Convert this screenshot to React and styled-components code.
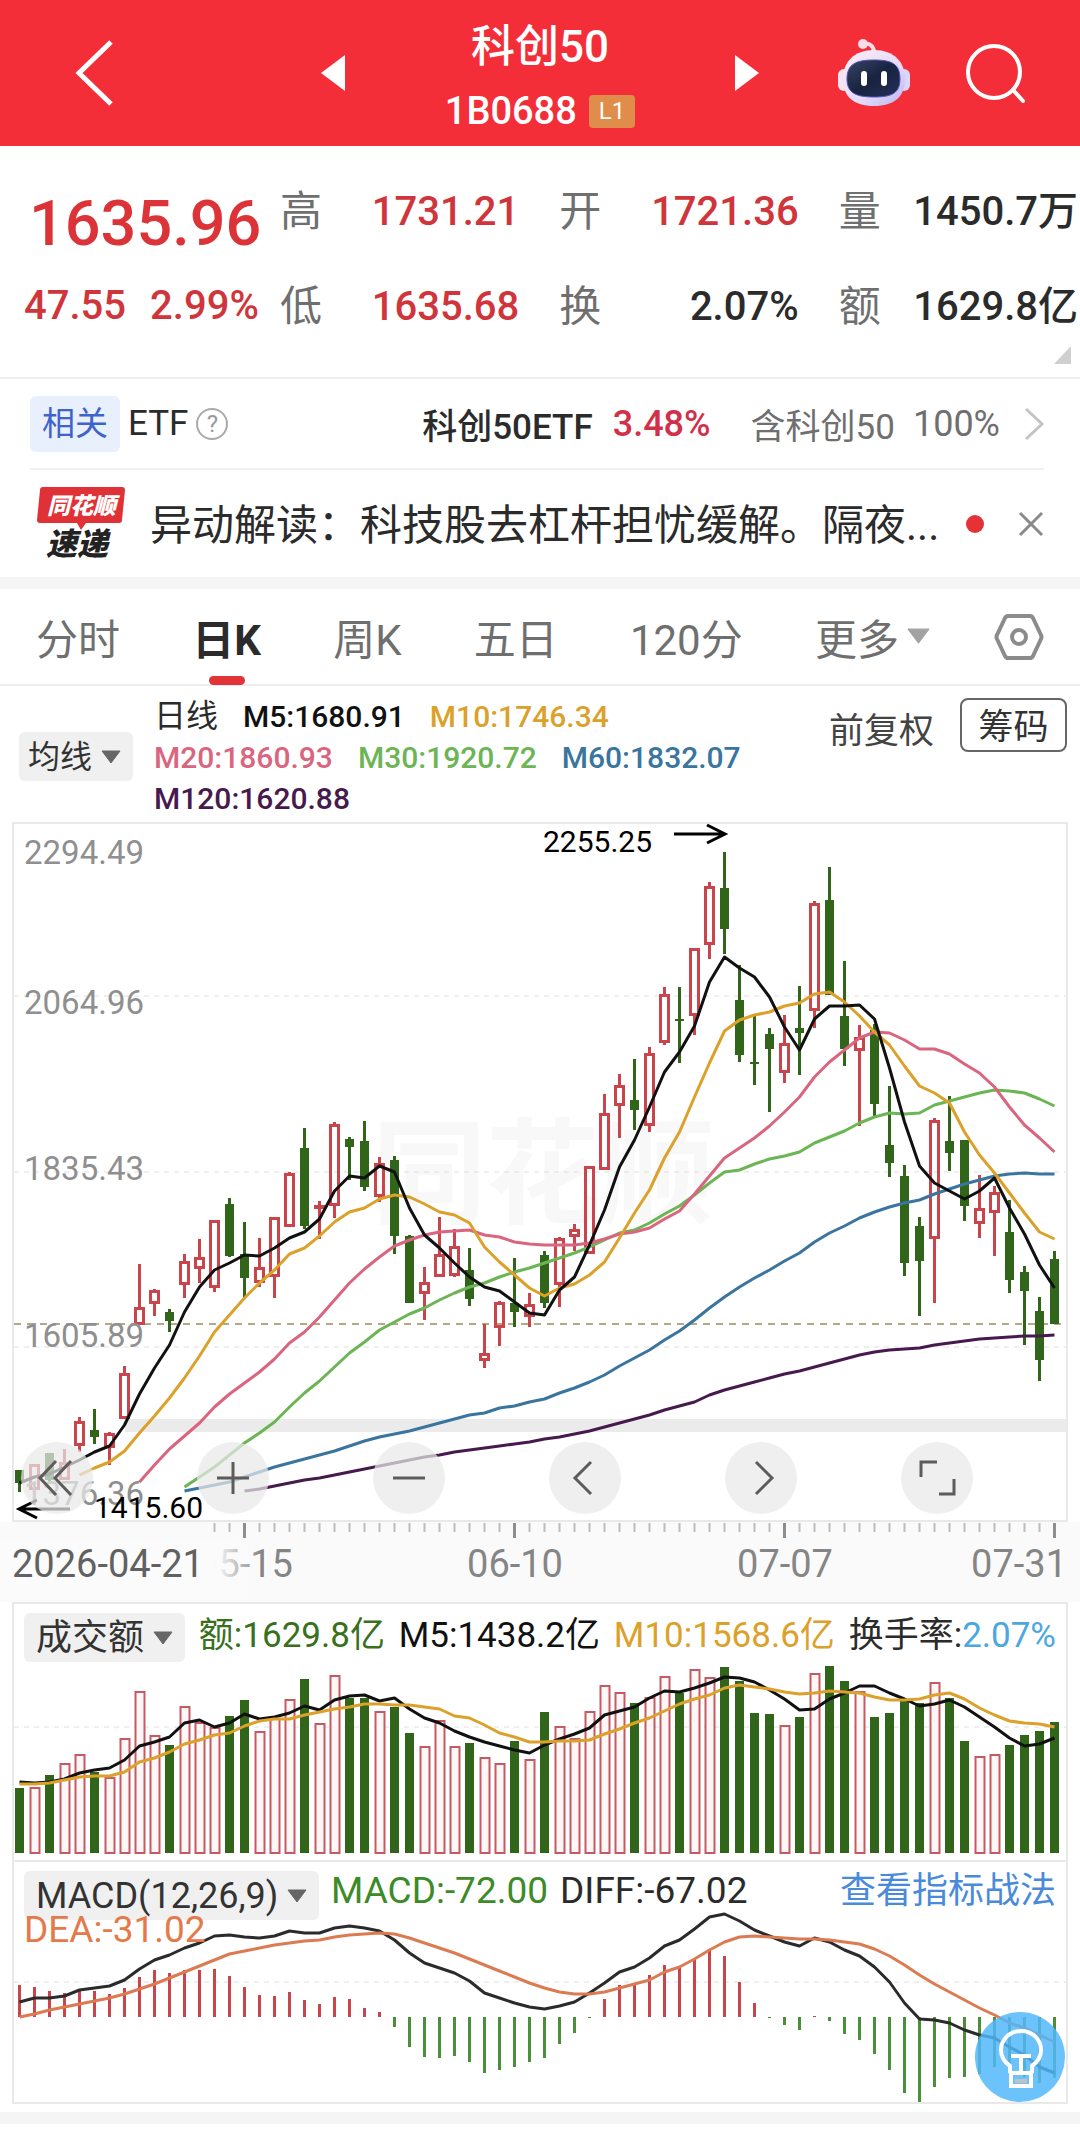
import React, { useState } from "react";
import styled, { createGlobalStyle } from "styled-components";

const GlobalStyle = createGlobalStyle`
  :root {
    --brand: #f42e38;
    --up: #d0353b;
    --dark: #2b2b2b;
    --grey: #6f6f6f;
    --line: #e9e9e9;
    --chip: #f0f0f0;
  }

  * {
    box-sizing: border-box;
  }

  body {
    margin: 0;
    background: #fff;
    color: var(--dark);
    font-family: Roboto, "Noto Sans CJK SC", sans-serif;
  }

  button, select {
    margin: 0;
    padding: 0;
    border: 0;
    background: none;
    color: inherit;
    font: inherit;
    cursor: pointer;
  }

  svg {
    display: block;
    overflow: visible;
  }
`;

const Page = styled.div`
  overflow-x: hidden;
`;

const Header = styled.header`
  display: grid;
  grid-template-columns: 1fr 438px 1fr;
  align-items: center;
  height: 146px;
  background: var(--brand);
  color: #fff;
`;

const HeaderSide = styled.div`
  display: flex;
  align-items: center;
  justify-content: ${props => (props.$end ? "flex-end" : "flex-start")};
  gap: 52px;
  padding: ${props => (props.$end ? "0 54px 0 0" : "0 0 0 72px")};
`;

const HeaderCenter = styled.div`
  display: flex;
  align-items: center;
  justify-content: space-between;
`;

const Title = styled.div`
  display: flex;
  flex-direction: column;
  align-items: center;
  padding-top: 12px;

  h1 {
    margin: 0;
    font-size: 44px;
    font-weight: 500;
    line-height: 64px;
  }

  p {
    display: flex;
    align-items: center;
    gap: 12px;
    margin: 0;
    font-size: 38px;
    font-weight: 500;
    line-height: 64px;
  }
`;

const LevelBadge = styled.span`
  padding: 0 10px;
  border-radius: 4px;
  background: #e08c4a;
  font-size: 24px;
  font-weight: 400;
  line-height: 33px;
`;

const Quote = styled.section`
  position: relative;
  display: flex;
  height: 233px;
  padding: 18px 2px 0 24px;
  border-bottom: 2px solid #efefef;
`;

const PriceColumn = styled.div`
  width: 256px;
  color: var(--up);
  font-weight: 500;
`;

const Price = styled.div`
  padding-left: 5px;
  font-size: 63px;
  line-height: 120px;
  color: #dc3338;
`;

const Change = styled.div`
  display: flex;
  gap: 24px;
  font-size: 40px;
  line-height: 44px;
`;

const Stats = styled.dl`
  flex: 1;
  display: grid;
  grid-template-columns: repeat(3, 1fr);
  grid-auto-rows: 95px;
  column-gap: 40px;
  margin: 0;
`;

const Stat = styled.div`
  display: flex;
  justify-content: space-between;
  align-items: center;
  font-size: 40px;
  line-height: 95px;
  white-space: nowrap;

  dt {
    font-size: 42px;
    color: var(--grey);
  }

  dd {
    margin: 0;
    font-weight: 500;
    color: ${props => (props.$up ? "var(--up)" : "var(--dark)")};
  }
`;

const Corner = styled.span`
  position: absolute;
  right: 9px;
  bottom: 13px;
  border-left: 17px solid transparent;
  border-bottom: 18px solid #cfcfcf;
`;

const EtfRow = styled.a`
  display: flex;
  align-items: center;
  height: 91px;
  margin: 0 36px 0 30px;
  border-bottom: 2px solid #f1f1f1;
  color: var(--grey);
  font-size: 35px;
  text-decoration: none;
  white-space: nowrap;
`;

const EtfTag = styled.span`
  margin-right: 8px;
  padding: 0 12px;
  border-radius: 6px;
  background: #e8effd;
  color: #3e63cb;
  font-size: 33px;
  line-height: 56px;
`;

const EtfName = styled.span`
  margin-left: ${props => (props.$push ? "auto" : "0")};
  font-weight: ${props => (props.$push ? 500 : 400)};
  color: var(--dark);
`;

const Help = styled.span`
  width: 32px;
  margin-left: 8px;
  border: 2px solid #aaa;
  border-radius: 50%;
  color: #999;
  font-size: 24px;
  line-height: 28px;
  text-align: center;
`;

const EtfRate = styled.span`
  margin: 0 40px 0 20px;
  font-size: 36px;
  font-weight: 500;
  color: #d2304a;
`;

const EtfShare = styled.span`
  margin: 0 24px 0 18px;
  font-size: 36px;
`;

const News = styled.div`
  display: flex;
  align-items: center;
  height: 107px;
  padding: 0 36px;

  p {
    flex: 1;
    margin: 0 24px 0 24px;
    padding-top: 4px;
    overflow: hidden;
    font-size: 42px;
    line-height: 60px;
    white-space: nowrap;
  }
`;

const Dot = styled.span`
  width: 18px;
  height: 18px;
  margin-right: 34px;
  border-radius: 50%;
  background: #e53237;
`;

const Divider = styled.div`
  height: 12px;
  background: #f5f5f5;
`;

const TabBar = styled.div`
  display: flex;
  align-items: center;
  gap: 64px;
  height: 97px;
  padding: 0 36px;
  border-bottom: 2px solid #ececec;
`;

const Tabs = styled.nav`
  flex: 1;
  display: flex;
  justify-content: space-between;
`;

const Tab = styled.button`
  position: relative;
  display: flex;
  align-items: center;
  gap: 8px;
  height: 97px;
  color: ${props => (props.$active ? "var(--dark)" : "var(--grey)")};
  font-size: 42px;
  font-weight: ${props => (props.$active ? 700 : 400)};

  &::after {
    content: "";
    display: ${props => (props.$active ? "block" : "none")};
    position: absolute;
    bottom: 0;
    left: 50%;
    width: 36px;
    height: 9px;
    margin-left: -18px;
    border-radius: 5px;
    background: #e23338;
  }
`;

const Averages = styled.div`
  display: flex;
  align-items: flex-start;
  height: 136px;
  padding: 10px 13px 0 19px;
`;

const Legend = styled.div`
  flex: 1;
  display: flex;
  flex-wrap: wrap;
  align-content: flex-start;
  column-gap: 25px;
  margin-left: 21px;
  padding-right: 40px;
  font-size: 30px;
  font-weight: 500;
  line-height: 41px;

  span:first-child {
    font-size: 32px;
    font-weight: 400;
  }
`;

const Tinted = styled.span`
  color: ${props => props.$color};
  white-space: nowrap;
`;

const SelectBox = styled.label`
  position: relative;
  flex: none;
  margin-top: ${props => (props.$drop ? "36px" : "0")};

  select {
    display: block;
    height: 49px;
    padding: 0 40px 0 ${props => props.$pad || 12}px;
    border-radius: 6px;
    background: var(--chip);
    color: #333;
    font-size: ${props => props.$size || 32}px;
    line-height: 48px;
    appearance: none;
  }

  svg {
    position: absolute;
    right: 12px;
    top: 18px;
    pointer-events: none;
  }
`;

const Adjust = styled.button`
  margin: 8px 26px 0 16px;
  color: #444;
  font-size: 35px;
  line-height: 56px;
`;

const Chips = styled.button`
  width: 107px;
  height: 54px;
  margin-top: 2px;
  padding-top: 6px;
  border: 2px solid #666;
  border-radius: 8px;
  color: #333;
  font-size: 35px;
  line-height: 44px;
`;

const Panel = styled.section`
  position: relative;
  margin: 0 12px;
  border: 2px solid var(--line);
  border-bottom-width: ${props => (props.$open ? "0" : "2px")};

  > svg {
    width: 100%;
    height: auto;
  }
`;

const Controls = styled.div`
  position: absolute;
  left: 7px;
  bottom: 6px;
  display: flex;
  gap: 104px;
`;

const RoundButton = styled.button`
  display: grid;
  place-items: center;
  width: 72px;
  height: 72px;
  border-radius: 50%;
  background: rgba(233, 233, 233, 0.72);
`;

const Axis = styled.div`
  background: #fafafa;

  svg {
    width: 100%;
    height: auto;
  }
`;

const VolumeHead = styled.div`
  display: flex;
  justify-content: space-between;
  align-items: flex-start;
  height: 60px;
  padding: 9px 10px 0 10px;
  font-size: 35px;
  line-height: 46px;
  white-space: nowrap;
`;

const MacdHead = styled.div`
  position: absolute;
  top: 9px;
  left: 10px;
  right: 10px;
  font-size: 37px;
  line-height: 40px;
  white-space: nowrap;
`;

const MacdRow = styled.div`
  display: flex;
  align-items: flex-start;
  gap: 12px;
  height: 39px;

  a {
    margin-left: auto;
    color: #4a8adb;
    font-size: 36px;
    text-decoration: none;
  }
`;

// sits over the lower edge of the indicator select
const DeaValue = styled.div`
  position: relative;
  z-index: 1;
  color: #e5794a;
`;

const BulbButton = styled.button`
  position: absolute;
  right: 1px;
  bottom: 0;
  width: 90px;
  height: 90px;
  border-radius: 50%;
  background: rgba(80, 184, 252, 0.84);
`;

const Footer = styled.div`
  padding-top: 8px;
`;

const COLORS = {
  red: "#c9444b",
  green: "#31661a",
  m5: "#111111",
  m10: "#dba12a",
  m20: "#d9657f",
  m30: "#6cb554",
  m60: "#3a759f",
  m120: "#471a4e",
};

// u = close above open, d = close below open; then high, body top, body bottom, low
const candles = [
  ["d", 1470, 1470, 1483, 1492], ["u", 1464, 1464, 1490, 1490], ["d", 1453, 1453, 1480, 1484],
  ["u", 1449, 1462, 1480, 1480], ["u", 1417, 1421, 1446, 1452], ["d", 1409, 1430, 1437, 1444],
  ["u", 1432, 1433, 1448, 1465], ["u", 1366, 1373, 1419, 1419], ["u", 1264, 1307, 1325, 1325],
  ["u", 1289, 1290, 1304, 1316], ["d", 1309, 1312, 1321, 1332], ["u", 1254, 1261, 1285, 1298],
  ["u", 1239, 1257, 1269, 1283], ["u", 1220, 1220, 1288, 1292], ["d", 1198, 1204, 1256, 1257],
  ["d", 1222, 1254, 1278, 1298], ["u", 1238, 1267, 1283, 1287], ["u", 1217, 1217, 1277, 1298],
  ["u", 1172, 1173, 1227, 1227], ["d", 1128, 1148, 1226, 1229], ["u", 1201, 1205, 1208, 1239],
  ["u", 1122, 1124, 1206, 1218], ["d", 1137, 1139, 1147, 1180], ["d", 1121, 1141, 1187, 1191],
  ["u", 1157, 1163, 1197, 1202], ["d", 1156, 1160, 1236, 1254], ["d", 1235, 1236, 1303, 1303],
  ["u", 1267, 1282, 1294, 1320], ["u", 1217, 1254, 1277, 1277], ["u", 1229, 1246, 1276, 1277],
  ["d", 1248, 1270, 1299, 1306], ["u", 1324, 1353, 1361, 1368], ["u", 1301, 1302, 1328, 1346],
  ["d", 1258, 1303, 1312, 1327], ["u", 1293, 1304, 1317, 1327], ["d", 1251, 1255, 1303, 1308],
  ["u", 1237, 1238, 1285, 1307], ["u", 1224, 1229, 1237, 1251], ["u", 1166, 1166, 1254, 1254],
  ["u", 1094, 1113, 1170, 1170], ["u", 1074, 1085, 1106, 1138], ["d", 1059, 1100, 1110, 1130],
  ["u", 1047, 1053, 1126, 1132], ["u", 987, 994, 1043, 1045], ["d", 987, 1019, 1021, 1063],
  ["u", 948, 948, 1016, 1035], ["u", 882, 886, 945, 959], ["d", 852, 888, 929, 954],
  ["d", 965, 1000, 1055, 1062], ["d", 1015, 1062, 1064, 1085], ["d", 1028, 1034, 1049, 1112],
  ["u", 1015, 1043, 1073, 1083], ["d", 986, 1028, 1033, 1075], ["u", 901, 903, 1011, 1028],
  ["d", 867, 900, 995, 995], ["d", 961, 1016, 1049, 1066], ["u", 1025, 1037, 1051, 1126],
  ["d", 1024, 1030, 1104, 1116], ["d", 1086, 1145, 1163, 1177], ["d", 1165, 1176, 1263, 1276],
  ["d", 1217, 1226, 1261, 1316], ["u", 1118, 1120, 1239, 1303], ["d", 1096, 1141, 1153, 1171],
  ["d", 1140, 1140, 1206, 1221], ["u", 1175, 1208, 1224, 1238], ["u", 1186, 1192, 1213, 1256],
  ["d", 1200, 1232, 1280, 1293], ["d", 1266, 1272, 1291, 1345], ["d", 1297, 1311, 1360, 1381],
  ["d", 1251, 1259, 1324, 1324],
];

const m5 = [
  1483, 1477, 1474, 1467, 1460, 1452, 1446, 1425, 1394, 1368, 1345, 1312, 1287, 1270, 1263, 1255,
  1256, 1248, 1238, 1232, 1219, 1191, 1176, 1178, 1166, 1172, 1208, 1235, 1248, 1263, 1277, 1287,
  1291, 1302, 1313, 1315, 1290, 1277, 1245, 1210, 1167, 1140, 1107, 1072, 1052, 1026, 982, 957,
  968, 977, 997, 1027, 1050, 1019, 1006, 1006, 1005, 1019, 1068, 1122, 1166, 1183, 1191, 1199,
  1191, 1178, 1208, 1234, 1265, 1288,
];
const m10 = [
  1475, 1468, 1462, 1451, 1433, 1416, 1398, 1378, 1356, 1332, 1315, 1298, 1283, 1270, 1254, 1248,
  1236, 1222, 1212, 1208, 1199, 1195, 1197, 1204, 1212, 1215, 1223, 1247, 1262, 1275, 1288, 1296,
  1288, 1284, 1275, 1262, 1238, 1213, 1190, 1158, 1132, 1097, 1063, 1031, 1020, 1015, 1012, 1006,
  1003, 994, 992, 1002, 1016, 1032, 1045, 1066, 1086, 1093, 1103, 1132, 1155, 1173, 1193, 1213,
  1232, 1239,
];
const m20 = [
  1482, 1465, 1449, 1436, 1423, 1407, 1394, 1383, 1372, 1359, 1343, 1332, 1317, 1300, 1283, 1269,
  1257, 1246, 1240, 1235, 1232, 1231, 1230, 1235, 1237, 1242, 1244, 1245, 1245, 1245, 1243, 1239,
  1234, 1232, 1228, 1219, 1211, 1194, 1176, 1158, 1148, 1138, 1126, 1112, 1097, 1077, 1062, 1050,
  1038, 1032, 1033, 1040, 1049, 1049, 1054, 1064, 1073, 1087, 1107, 1125, 1138, 1152,
];
const m30 = [
  1487, 1477, 1467, 1455, 1443, 1433, 1422, 1407, 1393, 1381, 1367, 1353, 1342, 1330, 1322, 1314,
  1308, 1300, 1293, 1287, 1283, 1277, 1272, 1268, 1263, 1258, 1253, 1247, 1240, 1233, 1230, 1223,
  1214, 1206, 1195, 1183, 1172, 1170, 1164, 1159, 1156, 1152, 1143, 1137, 1131, 1123, 1117, 1113,
  1114, 1113, 1105, 1101, 1097, 1093, 1090, 1091, 1093, 1099, 1106,
];
const m60 = [
  1491, 1488, 1485, 1482, 1477, 1472, 1467, 1463, 1459, 1455, 1451, 1446, 1441, 1437, 1434, 1431,
  1427, 1423, 1419, 1415, 1413, 1408, 1406, 1402, 1399, 1393, 1388, 1382, 1375, 1366, 1358, 1350,
  1340, 1331, 1320, 1308, 1297, 1287, 1278, 1270, 1261, 1253, 1242, 1233, 1226, 1218, 1212, 1207,
  1203, 1200, 1194, 1189, 1184, 1180, 1176, 1174, 1173, 1174, 1174,
];
const m120 = [
  1491, 1489, 1486, 1483, 1480, 1478, 1475, 1472, 1469, 1466, 1463, 1460, 1457, 1455, 1452, 1450,
  1448, 1446, 1444, 1442, 1439, 1437, 1434, 1431, 1427, 1423, 1419, 1415, 1410, 1406, 1402, 1395,
  1390, 1386, 1382, 1378, 1374, 1371, 1367, 1363, 1359, 1355, 1352, 1350, 1349, 1348, 1345, 1343,
  1341, 1339, 1338, 1337, 1336, 1336, 1335,
];

const volumes = [
  1788, 1787, 1775, 1763, 1754, 1772, 1777, 1738, 1691, 1735, 1745, 1706, 1722, 1727, 1716, 1700,
  1731, 1718, 1699, 1679, 1723, 1675, 1698, 1698, 1711, 1707, 1733, 1746, 1720, 1746, 1743, 1757,
  1763, 1741, 1759, 1712, 1726, 1738, 1711, 1685, 1692, 1703, 1697, 1676, 1693, 1669, 1677, 1667,
  1681, 1713, 1714, 1725, 1717, 1673, 1666, 1681, 1691, 1717, 1713, 1700, 1703, 1682, 1698, 1741,
  1756, 1754, 1745, 1735, 1731, 1722,
];
const volumeM5 = [
  1782, 1783, 1782, 1779, 1773, 1770, 1768, 1760, 1746, 1742, 1737, 1723, 1720, 1727, 1723, 1714,
  1719, 1717, 1713, 1706, 1710, 1700, 1696, 1695, 1701, 1698, 1709, 1718, 1723, 1731, 1737, 1742,
  1746, 1750, 1753, 1745, 1739, 1734, 1728, 1715, 1711, 1707, 1698, 1691, 1692, 1688, 1683, 1677,
  1678, 1682, 1690, 1699, 1710, 1709, 1699, 1693, 1686, 1686, 1693, 1699, 1706, 1704, 1700, 1707,
  1717, 1727, 1738, 1746, 1744, 1738,
];
const volumeM10 = [
  1784, 1784, 1783, 1780, 1777, 1776, 1776, 1772, 1762, 1758, 1752, 1744, 1740, 1735, 1733, 1726,
  1721, 1719, 1719, 1715, 1712, 1709, 1707, 1704, 1704, 1705, 1705, 1707, 1709, 1716, 1718, 1725,
  1733, 1737, 1742, 1742, 1741, 1741, 1740, 1734, 1729, 1723, 1718, 1711, 1704, 1699, 1695, 1688,
  1685, 1687, 1689, 1692, 1694, 1693, 1691, 1692, 1693, 1697, 1700, 1700, 1699, 1695, 1693, 1699,
  1708, 1715, 1721, 1723, 1724, 1727,
];

const MACD_ZERO = 2017;
const macd = [
  1985, 1987, 1991, 1993, 1991, 1991, 1994, 1988, 1977, 1970, 1973, 1970, 1970, 1969, 1976, 1987,
  1995, 1996, 1992, 2000, 2004, 1997, 1999, 2008, 2012, 2027, 2047, 2057, 2058, 2056, 2062, 2073,
  2070, 2067, 2062, 2058, 2044, 2033, 2018, 1999, 1985, 1984, 1975, 1965, 1966, 1959, 1951, 1956,
  1982, 2003, 2018, 2025, 2030, 2016, 2021, 2034, 2040, 2054, 2070, 2093, 2102, 2087, 2078, 2077,
  2074, 2067, 2073, 2077, 2083, 2078,
];
const diff = [
  2002, 1998, 1998, 1996, 1990, 1988, 1986, 1980, 1969, 1960, 1955, 1948, 1943, 1936, 1935, 1937,
  1938, 1936, 1931, 1933, 1933, 1928, 1926, 1928, 1931, 1940, 1953, 1963, 1968, 1973, 1981, 1993,
  1998, 2003, 2007, 2009, 2006, 2002, 1993, 1983, 1972, 1967, 1958, 1946, 1940, 1929, 1917, 1914,
  1921, 1930, 1936, 1942, 1946, 1938, 1942, 1950, 1956, 1967, 1982, 2003, 2019, 2020, 2023, 2030,
  2035, 2038, 2047, 2055, 2067, 2073,
];
const dea = [
  2017, 2014, 2010, 2007, 2004, 2001, 1998, 1994, 1989, 1984, 1978, 1972, 1966, 1960, 1954, 1951,
  1948, 1945, 1943, 1941, 1940, 1937, 1935, 1934, 1933, 1934, 1938, 1943, 1948, 1953, 1959, 1965,
  1971, 1977, 1983, 1988, 1992, 1994, 1994, 1992, 1988, 1984, 1980, 1972, 1967, 1959, 1950, 1942,
  1937, 1936, 1937, 1938, 1939, 1939, 1940, 1942, 1944, 1949, 1956, 1965, 1975, 1984, 1992, 2000,
  2008, 2015, 2023, 2028, 2035, 2042,
];

const xAt = i => 19.5 + i * 15;

const Line = ({ data, color, start = 0, width = 3 }) => (
  <polyline
    points={data.map((y, i) => `${xAt(i + start)},${y}`).join(" ")}
    fill="none"
    stroke={color}
    strokeWidth={width}
    strokeLinejoin="round"
  />
);

const Grid = ({ rows }) =>
  rows.map(y => (
    <line key={y} x1="14" x2="1066" y1={y} y2={y} stroke="#dedede" strokeDasharray="5 5" />
  ));

const Candle = ({ index, data }) => {
  const [dir, high, top, bottom, low] = data;
  const x = xAt(index);
  if (dir === "d") {
    return (
      <g fill={COLORS.green}>
        <rect x={x - 1.5} y={high} width="3" height={low - high} />
        <rect x={x - 4.5} y={top} width="9" height={Math.max(bottom - top, 2)} />
      </g>
    );
  }
  return (
    <g stroke={COLORS.red} strokeWidth="3" fill="none">
      <path d={`M${x} ${high}V${top}M${x} ${bottom}V${low}`} />
      <rect x={x - 4} y={top + 1.5} width="8" height={Math.max(bottom - top - 3, 1)} />
    </g>
  );
};

const priceLabels = [
  ["2294.49", 864],
  ["2064.96", 1014],
  ["1835.43", 1180],
  ["1605.89", 1347],
  ["1376.36", 1505],
];

const PriceChart = () => (
  <svg viewBox="14 824 1052 696">
    <text x="372" y="1214" fontSize="114" fontWeight="700" fill="#f8f8f8">
      同花顺
    </text>
    <Grid rows={[996, 1172, 1347]} />
    <rect x="125" y="1419" width="941" height="13" fill="#ebebeb" />
    <line x1="14" x2="1066" y1="1324" y2="1324" stroke="#b3aa84" strokeWidth="2" strokeDasharray="7 6" />
    {candles.map((c, i) => (
      <Candle key={i} index={i} data={c} />
    ))}
    <Line data={m120} color={COLORS.m120} start={15} />
    <Line data={m60} color={COLORS.m60} start={11} />
    <Line data={m30} color={COLORS.m30} start={11} />
    <Line data={m20} color={COLORS.m20} start={8} />
    <Line data={m10} color={COLORS.m10} start={4} />
    <Line data={m5} color={COLORS.m5} />
    <g fontSize="33" fill="#8f8f8f">
      {priceLabels.map(([label, y]) => (
        <text key={label} x="24" y={y}>
          {label}
        </text>
      ))}
    </g>
    <g fontSize="30" fill="#000">
      <text x="543" y="852">2255.25</text>
      <text x="94" y="1518">1415.60</text>
    </g>
    <g fill="none" stroke="#000" strokeWidth="3">
      <path d="M674 834H724M707 825L725 834L707 843" />
      <path d="M70 1509H20M37 1500L19 1509L37 1518" />
    </g>
  </svg>
);

const TimeAxis = () => (
  <Axis>
    <svg viewBox="0 1522 1080 80">
      <defs>
        <linearGradient id="axisFade" x1="0" x2="1" y1="0" y2="0">
          <stop offset="0.82" stopColor="#fbfbfb" />
          <stop offset="1" stopColor="#fbfbfb" stopOpacity="0" />
        </linearGradient>
      </defs>
      {candles.map((_, i) => {
        const major = i % 18 === 15;
        return i < 13 ? null : (
          <line
            key={i}
            x1={xAt(i)}
            x2={xAt(i)}
            y1="1523"
            y2={major ? 1538 : 1532}
            stroke={major ? "#8e8e8e" : "#bdbdbd"}
            strokeWidth={major ? 3 : 2}
          />
        );
      })}
      <g fontSize="38" fill="#858585" textAnchor="middle">
        <text x="245" y="1577">05-15</text>
        <text x="515" y="1577">06-10</text>
        <text x="785" y="1577">07-07</text>
        <text x="1067" y="1577" textAnchor="end">07-31</text>
      </g>
      <rect x="0" y="1540" width="262" height="60" fill="url(#axisFade)" />
      <text x="12" y="1577" fontSize="38" fill="#616161">2026-04-21</text>
    </svg>
  </Axis>
);

const VolumeChart = () => (
  <svg viewBox="14 1664 1052 196">
    <Grid rows={[1727]} />
    {volumes.map((y, i) =>
      candles[i][0] === "d" ? (
        <rect key={i} x={xAt(i) - 4.5} y={y} width="9" height={1853 - y} fill={COLORS.green} />
      ) : (
        <rect
          key={i}
          x={xAt(i) - 4}
          y={y + 1}
          width="9"
          height={1852 - y}
          fill="#fff6f6"
          stroke="#c55a64"
          strokeWidth="2"
        />
      )
    )}
    <Line data={volumeM5} color={COLORS.m5} />
    <Line data={volumeM10} color={COLORS.m10} />
  </svg>
);

const MacdChart = () => (
  <svg viewBox="14 1862 1052 240">
    <Grid rows={[1982]} />
    {macd.map((y, i) => (
      <line
        key={i}
        x1={xAt(i)}
        x2={xAt(i)}
        y1={MACD_ZERO}
        y2={y}
        stroke={y < MACD_ZERO ? "#c9444b" : "#4a8f3a"}
        strokeWidth="3"
      />
    ))}
    <Line data={diff} color="#2b2b2b" />
    <Line data={dea} color="#dc7a52" />
  </svg>
);

const Caret = ({ size = 20, color = "#666" }) => (
  <svg width={size} height={size * 0.7} viewBox="0 0 20 14">
    <path d="M1 1H19L10 13Z" fill={color} stroke={color} strokeLinejoin="round" />
  </svg>
);

const Robot = () => (
  <svg width="76" height="76" viewBox="0 -2 76 76">
    <defs>
      <linearGradient id="shell" x1="0" x2="1" y1="0" y2="1">
        <stop offset="0" stopColor="#fdeef6" />
        <stop offset="0.6" stopColor="#e3daf8" />
        <stop offset="1" stopColor="#b9b3f2" />
      </linearGradient>
      <linearGradient id="visor" x1="0" x2="1" y1="0" y2="1">
        <stop offset="0" stopColor="#3a4466" />
        <stop offset="0.5" stopColor="#182340" />
        <stop offset="1" stopColor="#24305a" />
      </linearGradient>
    </defs>
    <path d="M28 7C34 6 38 9 38 16" fill="none" stroke="#fbdbe6" strokeWidth="4" />
    <circle cx="27" cy="7" r="5" fill="#fbdbe6" />
    <rect x="2" y="32" width="12" height="22" rx="6" fill="#f7e4f2" />
    <rect x="62" y="32" width="12" height="22" rx="6" fill="#dcd6fa" />
    <path
      d="M38 13C58 13 69 25 69 42C69 60 58 69 38 69C18 69 7 60 7 42C7 25 18 13 38 13Z"
      fill="url(#shell)"
    />
    <path
      d="M38 23C56 23 64 27 64 42C64 56 56 60 38 60C20 60 11 56 11 42C11 27 20 23 38 23Z"
      fill="url(#visor)"
      stroke="#5750b4"
      strokeWidth="1"
    />
    <rect x="25" y="34" width="6" height="15" rx="3" fill="#fff" />
    <rect x="45" y="34" width="6" height="15" rx="3" fill="#fff" />
  </svg>
);

const NewsLogo = () => (
  <svg width="90" height="76" viewBox="0 0 90 76">
    <path
      d="M7 1H86Q89 1 89 4L86 34Q86 37 83 37H50L45 44L41 37H4Q1 37 1 34L4 4Q4 1 7 1Z"
      fill="#e03236"
    />
    <text x="11" y="28" fontSize="23" fontWeight="900" fontStyle="italic" fill="#fff">
      同花顺
    </text>
    <text x="10" y="69" fontSize="31" fontWeight="900" fontStyle="italic" fill="#222">
      速递
    </text>
  </svg>
);

const Glyph = ({ d, size = 40 }) => (
  <svg width={size} height={size} viewBox="0 0 40 40">
    <path d={d} fill="none" stroke="#5c5c5c" strokeWidth="3" />
  </svg>
);

const controls = [
  ["快退", "M19 3L3 20L19 37M34 3L18 20L34 37"],
  ["放大", "M4 20H36M20 4V36"],
  ["缩小", "M4 20H36"],
  ["左移", "M26 4L10 20L26 36"],
  ["右移", "M15 4L31 20L15 36"],
  ["全屏", "M4 19V4H20M22 36H37V21"],
];

const tabs = ["分时", "日K", "周K", "五日", "120分"];

const App = () => {
  const [active, setActive] = useState("日K");

  return (
    <Page>
      <GlobalStyle />
      <Header>
        <HeaderSide>
          <button aria-label="返回">
            <svg width="44" height="68" viewBox="0 0 44 68">
              <path d="M39 3L7 34L39 65" fill="none" stroke="#fff" strokeWidth="5" />
            </svg>
          </button>
        </HeaderSide>
        <HeaderCenter>
          <button aria-label="上一个">
            <svg width="24" height="36" viewBox="0 0 24 36">
              <path d="M0 18L24 0V36Z" fill="#fff" />
            </svg>
          </button>
          <Title>
            <h1>科创50</h1>
            <p>
              1B0688 <LevelBadge>L1</LevelBadge>
            </p>
          </Title>
          <button aria-label="下一个">
            <svg width="24" height="36" viewBox="0 0 24 36">
              <path d="M24 18L0 0V36Z" fill="#fff" />
            </svg>
          </button>
        </HeaderCenter>
        <HeaderSide $end>
          <button aria-label="智能助手">
            <Robot />
          </button>
          <button aria-label="搜索">
            <svg width="62" height="62" viewBox="0 0 62 62">
              <circle cx="30" cy="30" r="26" fill="none" stroke="#fff" strokeWidth="4" />
              <path d="M49 48L59 59" stroke="#fff" strokeWidth="4" strokeLinecap="round" />
            </svg>
          </button>
        </HeaderSide>
      </Header>

      <Quote>
        <PriceColumn>
          <Price>1635.96</Price>
          <Change>
            <span>47.55</span>
            <span>2.99%</span>
          </Change>
        </PriceColumn>
        <Stats>
          <Stat $up><dt>高</dt><dd>1731.21</dd></Stat>
          <Stat $up><dt>开</dt><dd>1721.36</dd></Stat>
          <Stat><dt>量</dt><dd>1450.7万</dd></Stat>
          <Stat $up><dt>低</dt><dd>1635.68</dd></Stat>
          <Stat><dt>换</dt><dd>2.07%</dd></Stat>
          <Stat><dt>额</dt><dd>1629.8亿</dd></Stat>
        </Stats>
        <Corner />
      </Quote>

      <EtfRow href="#etf">
        <EtfTag>相关</EtfTag>
        <EtfName>ETF</EtfName>
        <Help>?</Help>
        <EtfName $push>科创50ETF</EtfName>
        <EtfRate>3.48%</EtfRate>
        <span>含科创50</span>
        <EtfShare>100%</EtfShare>
        <svg width="20" height="34" viewBox="0 0 20 34">
          <path d="M2 2L18 17L2 32" fill="none" stroke="#c4c4c4" strokeWidth="3" />
        </svg>
      </EtfRow>

      <News>
        <NewsLogo />
        <p>异动解读：科技股去杠杆担忧缓解。隔夜...</p>
        <Dot />
        <button aria-label="关闭">
          <svg width="26" height="26" viewBox="0 0 26 26">
            <path d="M2 2L24 24M24 2L2 24" stroke="#8a8a8a" strokeWidth="3" />
          </svg>
        </button>
      </News>

      <Divider />

      <TabBar>
        <Tabs>
          {tabs.map(tab => (
            <Tab key={tab} $active={tab === active} onClick={() => setActive(tab)}>
              {tab}
            </Tab>
          ))}
          <Tab>
            更多
            <Caret size={23} color="#a2a2a2" />
          </Tab>
        </Tabs>
        <button aria-label="设置">
          <svg width="50" height="48" viewBox="0 0 50 48">
            <path
              d="M14 3H36Q38 3 39 5L47 22Q48 24 47 26L39 43Q38 45 36 45H14Q12 45 11 43L3 26Q2 24 3 22L11 5Q12 3 14 3Z"
              fill="none"
              stroke="#8b8b8b"
              strokeWidth="4"
            />
            <circle cx="25" cy="24" r="7" fill="none" stroke="#8b8b8b" strokeWidth="4" />
          </svg>
        </button>
      </TabBar>

      <Averages>
        <SelectBox $drop $pad={9}>
          <select aria-label="主图指标">
            <option>均线</option>
          </select>
          <Caret />
        </SelectBox>
        <Legend>
          <span>日线</span>
          <Tinted $color={COLORS.m5}>M5:1680.91</Tinted>
          <Tinted $color={COLORS.m10}>M10:1746.34</Tinted>
          <Tinted $color={COLORS.m20}>M20:1860.93</Tinted>
          <Tinted $color={COLORS.m30}>M30:1920.72</Tinted>
          <Tinted $color={COLORS.m60}>M60:1832.07</Tinted>
          <Tinted $color={COLORS.m120}>M120:1620.88</Tinted>
        </Legend>
        <Adjust>前复权</Adjust>
        <Chips>筹码</Chips>
      </Averages>

      <Panel>
        <PriceChart />
        <Controls>
          {controls.map(([label, d]) => (
            <RoundButton key={label} aria-label={label}>
              <Glyph d={d} />
            </RoundButton>
          ))}
        </Controls>
      </Panel>
      <TimeAxis />

      <Panel $open>
        <VolumeHead>
          <SelectBox $size={36}>
            <select aria-label="成交指标">
              <option>成交额</option>
            </select>
            <Caret />
          </SelectBox>
          <Tinted $color="#38701c">额:1629.8亿</Tinted>
          <Tinted $color={COLORS.m5}>M5:1438.2亿</Tinted>
          <Tinted $color={COLORS.m10}>M10:1568.6亿</Tinted>
          <span>
            换手率:<Tinted $color="#4aa8df">2.07%</Tinted>
          </span>
        </VolumeHead>
        <VolumeChart />
      </Panel>

      <Panel>
        <MacdChart />
        <MacdHead>
          <MacdRow>
            <SelectBox $size={36}>
              <select aria-label="副图指标">
                <option>MACD(12,26,9)</option>
              </select>
              <Caret />
            </SelectBox>
            <Tinted $color="#3d8b28">MACD:-72.00</Tinted>
            <span>DIFF:-67.02</span>
            <a href="#macd">查看指标战法</a>
          </MacdRow>
          <DeaValue>DEA:-31.02</DeaValue>
        </MacdHead>
        <BulbButton aria-label="提示">
          <svg width="90" height="90" viewBox="0 0 90 90" fill="none" stroke="#fff" strokeWidth="4">
            <path d="M35 61V54C28 49 26 43 26 38C26 27 35 19 46 19C57 19 66 27 66 38C66 43 64 49 57 54V61" />
            <path d="M36 61H56V74H36ZM36 44H56M46 44V61" />
            <path d="M40 69H52" stroke="#c2c2c2" />
          </svg>
        </BulbButton>
      </Panel>
      <Footer>
        <Divider />
      </Footer>
    </Page>
  );
};

export default App;
